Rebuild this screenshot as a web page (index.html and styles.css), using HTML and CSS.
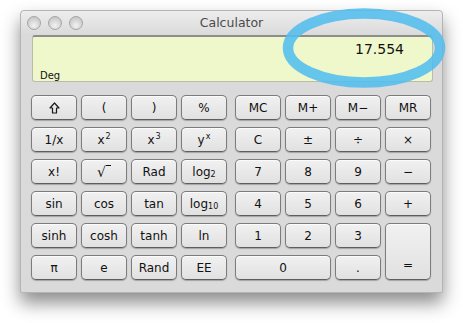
FILE: index.html
```html
<!DOCTYPE html>
<html lang="en">
<head>
    <meta charset="UTF-8">
    <title>Calculator</title>
    <link rel="stylesheet" href="styles.css">
</head>
<body>

    <div class="window">
        <div class="titlebar">
            <div class="lights"><span></span><span></span><span></span></div>
            <div class="title">Calculator</div>
            <div></div>
        </div>

        <div class="display">
            <div class="value">17.554</div>
            <div class="mode">Deg</div>
        </div>

        <div class="keypad">
            <!-- scientific keys -->
            <div class="keys">
                <button class="key">
                    <svg width="11" height="12" viewBox="0 0 11 12"><path d="M5.5 1 L10 6 H7.5 V11 H3.5 V6 H1 Z" fill="none" stroke="#1a1a1a" stroke-width="1.2" stroke-linejoin="round"/></svg>
                </button>
                <button class="key">(</button>
                <button class="key">)</button>
                <button class="key">%</button>

                <button class="key">1/x</button>
                <button class="key">x<sup>2</sup></button>
                <button class="key">x<sup>3</sup></button>
                <button class="key">y<sup>x</sup></button>

                <button class="key">x!</button>
                <button class="key"><span class="root">√<span class="bar"></span></span></button>
                <button class="key">Rad</button>
                <button class="key">log<sub>2</sub></button>

                <button class="key">sin</button>
                <button class="key">cos</button>
                <button class="key">tan</button>
                <button class="key">log<sub>10</sub></button>

                <button class="key">sinh</button>
                <button class="key">cosh</button>
                <button class="key">tanh</button>
                <button class="key">ln</button>

                <button class="key">π</button>
                <button class="key">e</button>
                <button class="key">Rand</button>
                <button class="key">EE</button>
            </div>

            <!-- basic keys -->
            <div class="keys">
                <button class="key">MC</button>
                <button class="key">M+</button>
                <button class="key">M−</button>
                <button class="key">MR</button>

                <button class="key">C</button>
                <button class="key">±</button>
                <button class="key">÷</button>
                <button class="key">×</button>

                <button class="key">7</button>
                <button class="key">8</button>
                <button class="key">9</button>
                <button class="key">−</button>

                <button class="key">4</button>
                <button class="key">5</button>
                <button class="key">6</button>
                <button class="key">+</button>

                <button class="key">1</button>
                <button class="key">2</button>
                <button class="key">3</button>
                <button class="key equals">=</button>

                <button class="key zero">0</button>
                <button class="key">.</button>
            </div>
        </div>
    </div>

    <!-- highlight ring -->
    <svg class="ring" width="180" height="90" viewBox="0 0 180 90">
        <ellipse cx="83" cy="41" rx="76" ry="34.5" fill="none" stroke="#52bdee" stroke-opacity="0.88" stroke-width="10.5"/>
    </svg>

</body>
</html>
```

FILE: styles.css
```css
* {
    margin: 0;
    padding: 0;
    box-sizing: border-box;
}

body {
    background: #fff;
    font-family: "DejaVu Sans", sans-serif;
    position: relative;
    width: 463px;
    height: 323px;
    overflow: hidden;
}

.window {
    margin: 10px 0 0 20px;
    width: 423px;
    height: 283px;
    background: #dadada;
    border: 1px solid #b4b4b4;
    border-radius: 4px 4px 2px 2px;
    box-shadow: 0 10px 18px rgba(0, 0, 0, 0.45);
}

.titlebar {
    height: 23px;
    display: grid;
    grid-template-columns: 1fr auto 1fr;
    align-items: center;
    background: linear-gradient(#ededed, #dbdbdb);
    border-radius: 4px 4px 0 0;
}

.lights {
    display: flex;
    gap: 7px;
    padding-left: 6px;
}
.lights span {
    width: 14px;
    height: 14px;
    border-radius: 50%;
    border: 1px solid #a5a5a5;
    background: radial-gradient(circle at 50% 70%, #f2f2f2, #c9c9c9 75%);
}

.title {
    font-size: 12.5px;
    color: #4b4b4b;
}

.display {
    margin: 1px 9px 0 11px;
    height: 47px;
    background: #eff8cb;
    border: 1px solid #b9bca6;
    border-top: 2px solid #8d8d8d;
    border-radius: 3px;
    padding: 4px 28px 0 7px;
    display: flex;
    flex-direction: column;
}

.value {
    text-align: right;
    font-size: 14px;
    color: #111;
    height: 33px;
}

.mode {
    font-size: 10px;
    color: #111;
}

.keypad {
    display: flex;
    gap: 8px;
    margin-top: 13px;
    padding-left: 10px;
}

.keys {
    display: grid;
    grid-template-columns: repeat(4, 46px);
    grid-auto-rows: 25px;
    column-gap: 4px;
    row-gap: 7px;
}

.key {
    font-family: "DejaVu Sans", sans-serif;
    font-size: 12px;
    color: #111;
    border: 1px solid #7c7c7c;
    border-bottom-color: #5e5e5e;
    border-radius: 5px;
    background: linear-gradient(#f1f1f1, #e1e1e1);
    box-shadow: inset 0 1px 0 #fbfbfb, 0 1px 1px rgba(0, 0, 0, 0.25);
    display: flex;
    align-items: center;
    justify-content: center;
    padding-top: 1px;
}

.key sup {
    font-size: 8px;
    position: relative;
    top: -4px;
    margin-left: 1px;
}
.key sub {
    font-size: 8px;
    position: relative;
    top: 2px;
}

.root {
    display: flex;
    align-items: flex-start;
    font-size: 14px;
}
.root .bar {
    width: 5px;
    margin-top: 1px;
    border-top: 1px solid #111;
}

.equals {
    grid-row: span 2;
    align-items: flex-end;
    padding-bottom: 7px;
}

.zero {
    grid-column: span 2;
}

.ring {
    position: absolute;
    left: 281px;
    top: 7px;
}
```
